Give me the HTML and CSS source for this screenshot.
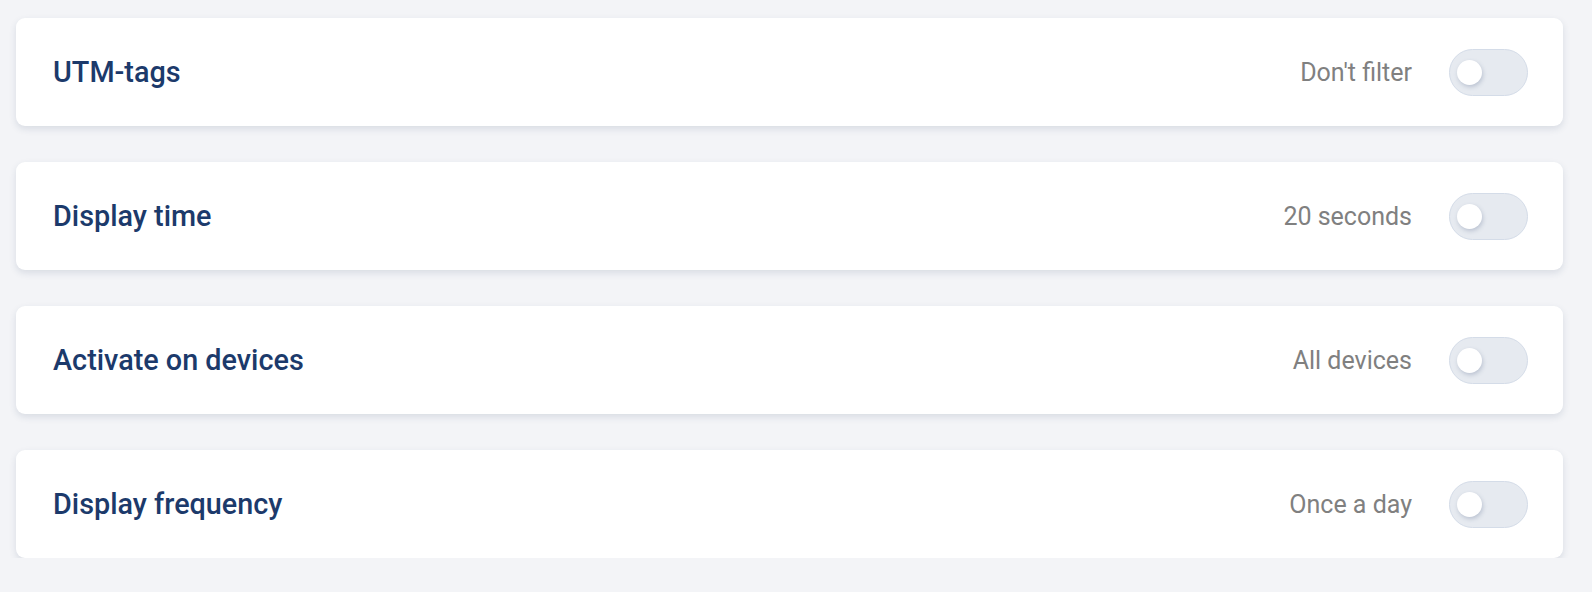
FILE: index.html
```html
<!DOCTYPE html>
<html lang="en">
<head>
<meta charset="utf-8">
<link rel="stylesheet" href="styles.css">
</head>
<body>
<div class="list">
  <div class="card">
    <div class="title">UTM-tags</div>
    <div class="right"><span class="value">Don't filter</span><span class="toggle"><span class="knob"></span></span></div>
  </div>
  <div class="card">
    <div class="title">Display time</div>
    <div class="right"><span class="value">20 seconds</span><span class="toggle"><span class="knob"></span></span></div>
  </div>
  <div class="card">
    <div class="title">Activate on devices</div>
    <div class="right"><span class="value">All devices</span><span class="toggle"><span class="knob"></span></span></div>
  </div>
  <div class="card">
    <div class="title">Display frequency</div>
    <div class="right"><span class="value">Once a day</span><span class="toggle"><span class="knob"></span></span></div>
  </div>
</div>
</body>
</html>
```

FILE: styles.css
```css
html, body {
  margin: 0;
  padding: 0;
  background: #f3f4f7;
  font-family: Roboto, "Liberation Sans", sans-serif;
}
.list {
  display: flex;
  flex-direction: column;
  gap: 36px;
  padding: 18px 29px 0 16px;
}
.card {
  height: 108px;
  box-sizing: border-box;
  background: #ffffff;
  border-radius: 9px;
  box-shadow: 0 3px 7px rgba(40, 60, 100, 0.13);
  display: flex;
  align-items: center;
  justify-content: space-between;
  padding: 0 35px 0 37px;
}
.title {
  font-size: 28.8px;
  font-weight: 500;
  color: #1c3a6b;
}
.right {
  display: flex;
  align-items: center;
  gap: 37px;
}
.value {
  font-size: 25px;
  color: #808080;
}
.toggle {
  width: 79px;
  height: 47px;
  box-sizing: border-box;
  border-radius: 24px;
  background: #e6eaf0;
  border: 1px solid #d4dce8;
  display: flex;
  align-items: center;
  padding-left: 7px;
}
.knob {
  width: 25px;
  height: 25px;
  border-radius: 50%;
  background: #ffffff;
  box-shadow: 1px 2px 4px rgba(60, 80, 120, 0.25);
}
```
